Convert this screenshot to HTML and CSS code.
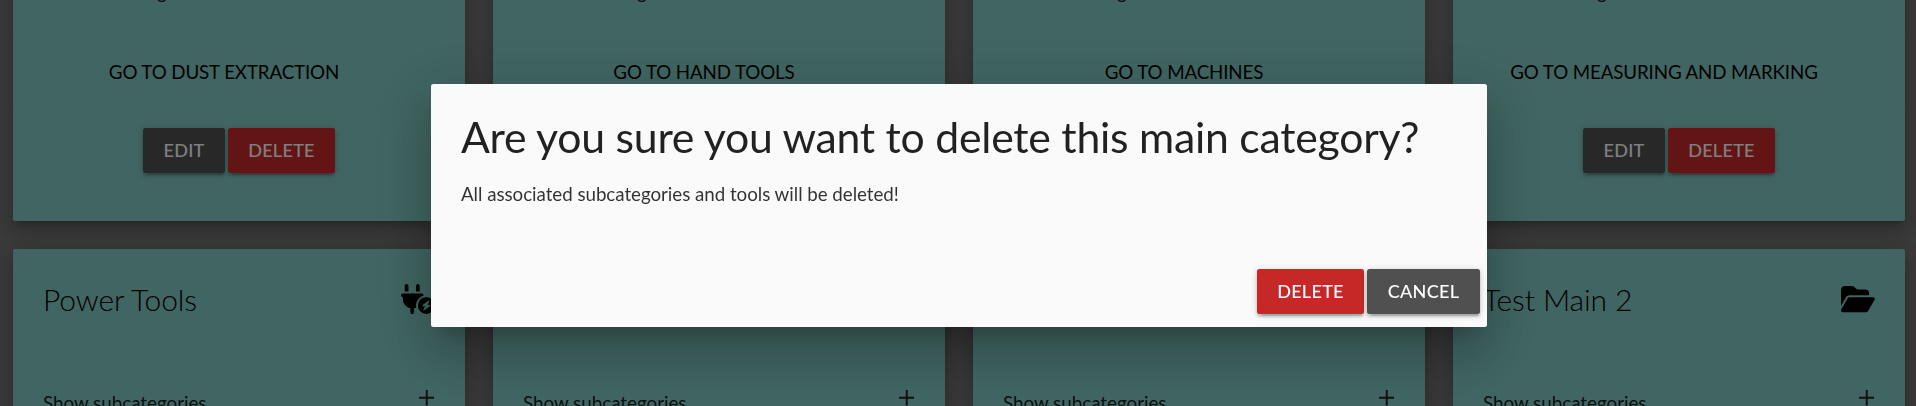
FILE: index.html
```html
<!DOCTYPE html>
<html lang="en">
<head>
<meta charset="utf-8">
<title>Categories</title>
<link rel="stylesheet" href="styles.css">
</head>
<body>
<main class="grid">
  <section class="card card-end">
    <div class="card-foot-text">Show subcategories</div>
    <div class="card-action"><a class="link">Go to Dust Extraction</a></div>
    <div class="card-action card-buttons"><a class="btn edit grey">Edit</a><a class="btn delete red">Delete</a></div>
  </section>
  <section class="card card-end">
    <div class="card-foot-text">Show subcategories</div>
    <div class="card-action"><a class="link">Go to Hand Tools</a></div>
    <div class="card-action card-buttons"></div>
  </section>
  <section class="card card-end">
    <div class="card-foot-text">Show subcategories</div>
    <div class="card-action"><a class="link">Go to Machines</a></div>
    <div class="card-action card-buttons"></div>
  </section>
  <section class="card card-end">
    <div class="card-foot-text">Show subcategories</div>
    <div class="card-action"><a class="link">Go to Measuring and Marking</a></div>
    <div class="card-action card-buttons"><a class="btn edit grey">Edit</a><a class="btn delete red">Delete</a></div>
  </section>

  <section class="card card-start">
    <div class="card-title"><span>Power Tools</span>
      <svg class="icon" viewBox="0 0 576 512"><path d="M96 0C78.3 0 64 14.3 64 32v96h64V32c0-17.7-14.3-32-32-32zM288 0c-17.7 0-32 14.3-32 32v96h64V32c0-17.7-14.3-32-32-32zM32 160c-17.7 0-32 14.3-32 32s14.3 32 32 32v32c0 77.4 55 142 128 156.8V480c0 17.7 14.3 32 32 32s32-14.3 32-32V412.8c12.3-2.5 24.1-6.4 35.1-11.5c-2.1-10.8-3.1-21.9-3.1-33.3c0-80.3 53.8-148 127.3-169.2c.5-2.2 .7-4.5 .7-6.8c0-17.7-14.3-32-32-32H32zM432 512a144 144 0 1 0 0-288 144 144 0 1 0 0 288zm47.9-225c4.3 3.7 5.4 9.9 2.6 14.9L452.4 356H488c5.2 0 9.8 3.3 11.4 8.2s-.1 10.3-4.2 13.4l-96 72c-4.5 3.4-10.8 3.2-15.1-.6s-5.4-9.900-2.6-14.9L411.6 380H376c-5.2 0-9.8-3.3-11.4-8.2s.1-10.3 4.2-13.4l96-72c4.5-3.4 10.800-3.2 15.1 .6z"/></svg>
    </div>
    <div class="reveal"><span>Show subcategories</span><svg class="plus" viewBox="0 0 16 16"><path d="M8 0v16M0 8h16"/></svg></div>
  </section>
  <section class="card card-start">
    <div class="card-title"></div>
    <div class="reveal"><span>Show subcategories</span><svg class="plus" viewBox="0 0 16 16"><path d="M8 0v16M0 8h16"/></svg></div>
  </section>
  <section class="card card-start">
    <div class="card-title"></div>
    <div class="reveal"><span>Show subcategories</span><svg class="plus" viewBox="0 0 16 16"><path d="M8 0v16M0 8h16"/></svg></div>
  </section>
  <section class="card card-start">
    <div class="card-title"><span>Test Main 2</span>
      <svg class="icon" viewBox="0 0 576 512"><path d="M88.7 223.8L0 375.8V96C0 60.7 28.7 32 64 32H181.5c17 0 33.3 6.7 45.3 18.7l26.5 26.5c12 12 28.3 18.7 45.3 18.7H416c35.3 0 64 28.7 64 64v32H144c-22.8 0-43.8 12.1-55.3 31.8zm27.6 16.1C122.1 230 132.6 224 144 224H544c11.5 0 22 6.1 27.7 16.1s5.7 22.2-.1 32.1l-112 192C453.9 474 443.4 480 432 480H32c-11.5 0-22-6.1-27.7-16.1s-5.7-22.2 .1-32.1l112-192z"/></svg>
    </div>
    <div class="reveal"><span>Show subcategories</span><svg class="plus" viewBox="0 0 16 16"><path d="M8 0v16M0 8h16"/></svg></div>
  </section>
</main>

<div class="overlay"></div>
<div class="modal" role="dialog">
  <div class="modal-content">
    <h4>Are you sure you want to delete this main category?</h4>
    <p>All associated subcategories and tools will be deleted!</p>
  </div>
  <div class="modal-footer"><a class="btn delete red">Delete</a><a class="btn cancel grey">Cancel</a></div>
</div>
</body>
</html>
```
FILE: styles.css
```css
* { box-sizing: border-box; }
body {
  margin: 0;
  height: 406px;
  overflow: hidden;
  background: #757575;
  font-family: Lato, sans-serif;
  font-size: 18.75px;
  line-height: 28px;
  color: rgba(0, 0, 0, .87);
}
.grid {
  display: grid;
  grid-template-columns: repeat(4, 452px);
  grid-template-rows: 221px 157px;
  gap: 28px;
  height: 406px;
  padding-left: 13px;
  overflow: hidden;
}
.card {
  background: #80cbc4;
  border-radius: 2px;
  box-shadow: 0 10px 21px 2px rgba(0,0,0,.14), 0 4px 17px 2px rgba(0,0,0,.12), 0 6px 6px -4px rgba(0,0,0,.2);
}
.card-end {
  display: flex;
  flex-direction: column;
  margin-top: -60px;
  height: 281px;
}
.card-foot-text { height: 97px; padding: 38px 30px 0; }
.card-action {
  height: 70px;
  border-top: 1px solid rgba(160, 160, 160, .2);
  padding: 20px 30px 0;
  text-align: center;
}
.link {
  margin-right: 30px;
  color: #000;
  letter-spacing: -.13px;
  text-transform: uppercase;
}
.card-buttons {
  display: flex;
  justify-content: center;
  gap: 3px;
  height: 114px;
}
.btn {
  height: 45px;
  border-radius: 2.5px;
  color: #fff;
  font-size: 18.1px;
  font-weight: 500;
  line-height: 45px;
  letter-spacing: .25px;
  text-align: center;
  text-transform: uppercase;
  box-shadow: 0 2.5px 2.5px rgba(0,0,0,.14), 0 4px 1px -2.5px rgba(0,0,0,.12), 0 1px 6px rgba(0,0,0,.2);
}
.edit { width: 82px; }
.delete { width: 107px; }
.cancel { width: 113px; }
.red { background: #c62828; }
.grey { background: #505050; }
.card-start { height: 260px; padding: 29px 30px; }
.card-title {
  display: flex;
  justify-content: space-between;
  height: 103px;
  color: #000;
  font-size: 30px;
  font-weight: 300;
  line-height: 42px;
  letter-spacing: -.1px;
}
.icon { width: 33.75px; height: 30px; margin-top: 6px; }
.reveal { display: flex; justify-content: space-between; padding-top: 8px; }
.plus {
  width: 15.5px;
  height: 15.5px;
  margin: 1px 1px 0 0;
  stroke: #222;
  stroke-width: 2;
  fill: none;
}
.overlay { position: fixed; inset: 0; background: rgba(0, 0, 0, .5); }
.modal {
  position: fixed;
  top: 84px;
  left: 431px;
  display: flex;
  flex-direction: column;
  justify-content: space-between;
  width: 1056px;
  height: 243px;
  border-radius: 2.5px;
  background: #fafafa;
  box-shadow: 0 30px 48px 4px rgba(0,0,0,.14), 0 11px 58px 10px rgba(0,0,0,.12), 0 14px 19px -9px rgba(0,0,0,.2);
}
.modal-content { padding: 29px 30px 0; }
.modal-content h4 {
  margin: 0 0 20px;
  font-size: 42.75px;
  font-weight: 400;
  line-height: 47px;
  letter-spacing: -.24px;
}
.modal-content p { margin: 0; color: rgba(0, 0, 0, .8); letter-spacing: -.04px; }
.modal-footer { display: flex; justify-content: flex-end; gap: 3px; padding: 0 7px 13px; }
```
